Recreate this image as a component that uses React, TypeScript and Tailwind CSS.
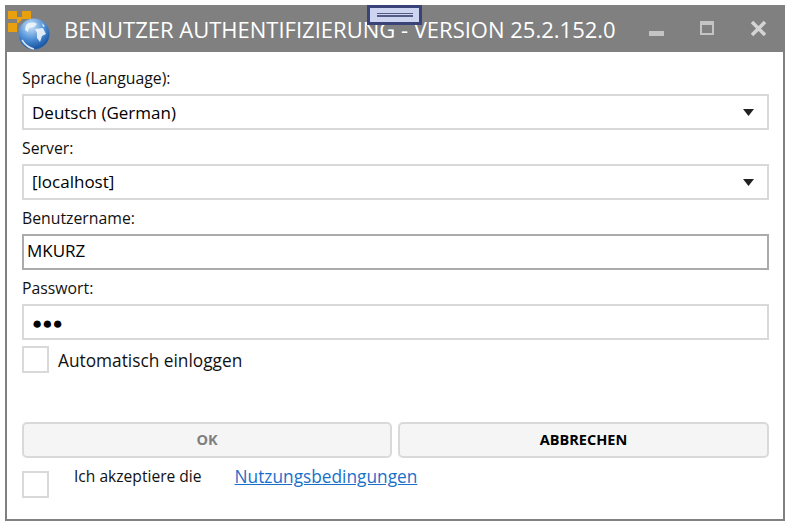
import { FC } from "react";

const font = "font-['Open_Sans','Noto_Sans',sans-serif]";

const Logo: FC = () => (
  <svg width="46" height="44" viewBox="0 0 46 44" className="shrink-0">
    <defs>
      <radialGradient id="globe" cx="0.4" cy="0.25" r="0.85">
        <stop offset="0" stopColor="#cfe6fa" />
        <stop offset="0.5" stopColor="#4f90d6" />
        <stop offset="0.85" stopColor="#1b56a3" />
        <stop offset="1" stopColor="#5d93cc" />
      </radialGradient>
    </defs>
    <path d="M3 4h9v8H3zM17 4h9v8h-9zM3 16h9v9H3z" fill="#e8a00e" />
    <path d="M12 10l5 0 0 2-3 4-2 0 0-4z" fill="#e8a00e" />
    <circle cx="29" cy="27" r="15.5" fill="url(#globe)" />
    <path d="M21 18c3-3 8-3 11-1l-3 3-5 1-1 4-3-2zM30 22l8-1 3 6-4 2-2 6-3-4 0-5zM37 16l3 3-2 1z" fill="#eef5fb" opacity="0.9" />
    <path d="M17 33c3 5 7 8 12 9" stroke="#d5e6f5" strokeWidth="1.5" fill="none" />
  </svg>
);

const Field: FC<{ label: string; value: string; select?: boolean; dark?: boolean; pad?: string; nudge?: string }> = ({
  label,
  value,
  select,
  dark,
  pad = "pl-[8px]",
  nudge = "",
}) => (
  <div className="flex flex-col">
    <label className="h-[24px] text-[15.8px] leading-[16px] text-[#111]">{label}</label>
    <div
      className={`h-[36px] flex items-center justify-between border-2 ${pad} pr-[13px] text-[17px] text-black ${
        dark ? "border-[#ababab]" : "border-[#d9d9d9]"
      }`}
    >
      <span className={nudge}>{value}</span>
      {select && (
        <svg width="11" height="7" viewBox="0 0 11 7">
          <path d="M0 0h11L5.5 7z" fill="#222" />
        </svg>
      )}
    </div>
  </div>
);

const Checkbox: FC = () => <div className="w-[27px] h-[27px] border-2 border-[#d9d9d9] shrink-0" />;

export default function App() {
  return (
    <div className={`relative w-[786px] h-[522px] bg-white pl-[5px] pr-[1px] pt-[5px] pb-[1px] ${font}`}>
      <div className="h-full flex flex-col border-x-[2px] border-b-[2px] border-[#808080]">
        <div className="h-[47px] -mx-[2px] bg-[#808080] flex items-center text-white shrink-0">
          <div className="w-[59px]">
            <Logo />
          </div>
          <span className="text-[22px] pt-[1px] whitespace-nowrap">BENUTZER AUTHENTIFIZIERUNG - VERSION 25.2.152.0</span>
          <div className="ml-auto flex items-center">
            <svg width="15" height="16" viewBox="0 0 15 16" className="mr-[36px]">
              <rect x="0" y="10" width="15" height="5" fill="#c4c4c4" />
            </svg>
            <svg width="15" height="15" viewBox="0 0 15 15" className="mr-[35px]">
              <rect x="1" y="1" width="12" height="12" fill="none" stroke="#c4c4c4" strokeWidth="2" />
              <rect x="1" y="1" width="12" height="3" fill="#c4c4c4" />
            </svg>
            <svg width="17" height="17" viewBox="0 0 17 17" className="mr-[18px]">
              <path d="M2 2l13 13M15 2L2 15" stroke="#d4d4d4" strokeWidth="3.5" />
            </svg>
          </div>
        </div>

        <div className="flex-1 flex flex-col pl-[15px] pr-[14px] pt-[18px]">
          <div className="flex flex-col gap-[10px]">
            <Field label="Sprache (Language):" value="Deutsch (German)" select nudge="pt-[1px]" />
            <Field label="Server:" value="[localhost]" select />
            <Field label="Benutzername:" value="MKURZ" dark pad="pl-[3px]" nudge="pb-[3px]" />
            <Field label="Passwort:" value="●●●" nudge="pt-[1px]" />
          </div>
          <div className="flex items-center mt-[6px] gap-[9px]">
            <Checkbox />
            <span className="text-[17.3px] pt-[2px] text-[#111]">Automatisch einloggen</span>
          </div>
          <div className="flex gap-[6px] mt-[48px]">
            <button className="w-[370px] h-[36px] rounded-[5px] border-2 border-[#d9d9d9] bg-[#f5f5f5] text-[14.5px] font-bold text-[#808080]">
              OK
            </button>
            <button className="flex-1 h-[36px] rounded-[5px] border-2 border-[#d9d9d9] bg-[#f5f5f5] text-[14.5px] font-bold text-black">
              ABBRECHEN
            </button>
          </div>
          <div className="flex mt-[13px]">
            <Checkbox />
            <span className="ml-[25px] -mt-[6px] text-[15.6px] leading-[22px] text-[#111]">Ich akzeptiere die</span>
            <a className="ml-[33px] -mt-[5px] text-[17.3px] leading-[22px] text-[#1a6fc9] underline">Nutzungsbedingungen</a>
          </div>
        </div>
      </div>

      <div className="absolute left-[367px] top-[5px] w-[55px] h-[20px] border-[3px] border-[#3a4377] bg-[#ccd4f0] flex flex-col items-center justify-center gap-[1px]">
        <div className="w-[36px] h-[1px] bg-[#555b85]" />
        <div className="w-[36px] h-[2px] bg-[#555b85]" />
      </div>
    </div>
  );
}
